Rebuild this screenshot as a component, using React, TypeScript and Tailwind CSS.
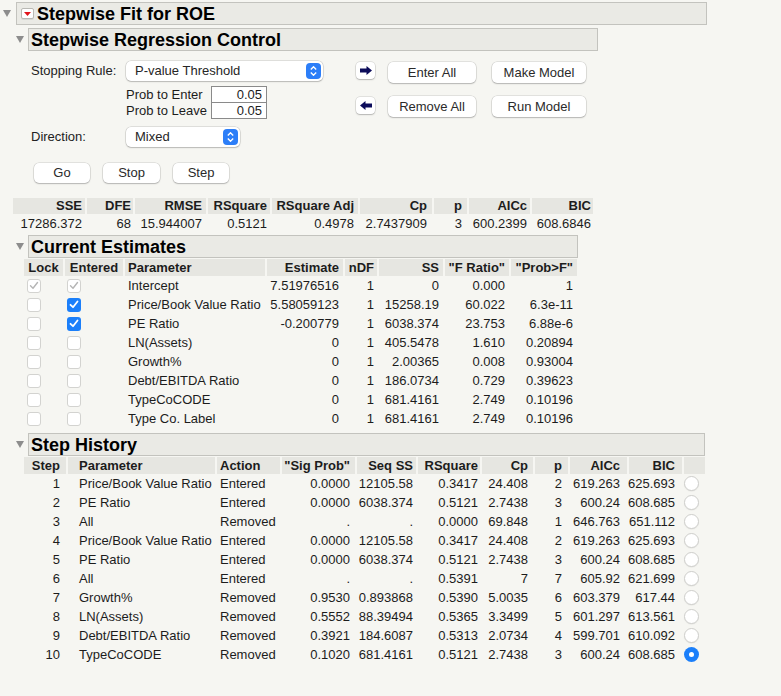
import React from 'react';

const Tri = () => (
  <svg width="8" height="7" viewBox="0 0 8 7" className="block">
    <polygon points="0,0 8,0 4,7" fill="#8d8d8d" />
  </svg>
);

const RedMenu = () => (
  <div className="w-[13px] h-[11px] rounded-[2px] border border-[#b9b9b4] bg-white flex items-center justify-center shadow-[0_1px_0_rgba(0,0,0,0.08)]">
    <svg width="7" height="4" viewBox="0 0 7 4" className="block">
      <polygon points="0,0 7,0 3.5,4" fill="#e0141b" />
    </svg>
  </div>
);

const Stepper = () => (
  <div className="w-[15px] h-[16px] rounded-[4px] bg-[#2c7ef8] flex flex-col items-center justify-center gap-[2px]">
    <svg width="7" height="4" viewBox="0 0 7 4" className="block">
      <polyline points="0.8,3.4 3.5,0.8 6.2,3.4" fill="none" stroke="white" strokeWidth="1.4" />
    </svg>
    <svg width="7" height="4" viewBox="0 0 7 4" className="block">
      <polyline points="0.8,0.6 3.5,3.2 6.2,0.6" fill="none" stroke="white" strokeWidth="1.4" />
    </svg>
  </div>
);

const Select: React.FC<{ label: string; w: string }> = ({ label, w }) => (
  <div className={`${w} h-[20px] bg-white rounded-[5px] shadow-[0_0_0_0.5px_rgba(0,0,0,0.18),0_1px_1.5px_rgba(0,0,0,0.18)] flex items-center justify-between pl-[9px] pr-[2px]`}>
    <span className="text-[#262626]">{label}</span>
    <Stepper />
  </div>
);

const Btn: React.FC<{ label: string; w: string; h?: string }> = ({ label, w, h = 'h-[20px]' }) => (
  <div className={`${w} ${h} bg-white rounded-[5px] shadow-[0_0_0_0.5px_rgba(0,0,0,0.16),0_1px_1.5px_rgba(0,0,0,0.2)] flex items-center justify-center text-[#2a2a2a]`}>
    {label}
  </div>
);

const ArrowBtn: React.FC<{ dir: 'r' | 'l' }> = ({ dir }) => (
  <div className="w-[19px] h-[17px] bg-white rounded-[4px] shadow-[0_0_0_0.5px_rgba(0,0,0,0.16),0_1px_1.5px_rgba(0,0,0,0.2)] flex items-center justify-center">
    <svg width="12" height="9" viewBox="0 0 12 9" className="block">
      {dir === 'r' ? (
        <path d="M0 2.5h6.5V0L12 4.5 6.5 9V6.5H0z" fill="#0c0c5a" />
      ) : (
        <path d="M12 2.5H5.5V0L0 4.5 5.5 9V6.5H12z" fill="#0c0c5a" />
      )}
    </svg>
  </div>
);

const Check: React.FC<{ state: 'off' | 'on' | 'dis' }> = ({ state }) => {
  if (state === 'on')
    return (
      <div className="w-[14px] h-[14px] rounded-[3px] bg-[#1b7ffa] flex items-center justify-center">
        <svg width="10" height="9" viewBox="0 0 10 9" className="block">
          <polyline points="1.5,4.8 4,7.2 8.5,1.5" fill="none" stroke="white" strokeWidth="1.8" strokeLinecap="round" strokeLinejoin="round" />
        </svg>
      </div>
    );
  return (
    <div className="w-[14px] h-[14px] rounded-[3px] bg-white border border-[#d3d3d0] flex items-center justify-center">
      {state === 'dis' && (
        <svg width="10" height="9" viewBox="0 0 10 9" className="block">
          <polyline points="1.5,4.8 4,7.2 8.5,1.5" fill="none" stroke="#b5b5b5" strokeWidth="1.4" strokeLinecap="round" strokeLinejoin="round" />
        </svg>
      )}
    </div>
  );
};

const Radio: React.FC<{ on?: boolean }> = ({ on }) =>
  on ? (
    <div className="w-[15px] h-[15px] rounded-full bg-[#1b7ffa] flex items-center justify-center">
      <div className="w-[5px] h-[5px] rounded-full bg-white" />
    </div>
  ) : (
    <div className="w-[15px] h-[15px] rounded-full bg-white border border-[#cfcfcc] shadow-[0_0.5px_1px_rgba(0,0,0,0.08)]" />
  );

const SectionHead: React.FC<{ title: string; w: string; mt: string }> = ({ title, w, mt }) => (
  <div className={`flex items-center ${mt}`}>
    <div className="w-[28px] pl-[16px] flex items-center">
      <Tri />
    </div>
    <div className={`${w} h-[23px] box-border border border-[#c3c3be] bg-[#eaeae5] flex items-center pl-[2px] text-[18px] font-bold text-black`}>
      {title}
    </div>
  </div>
);

// stats table
const statCols = [
  { h: 'SSE', v: '17286.372', p: 'pr-[3px]' },
  { h: 'DFE', v: '68', p: 'pr-[2px]' },
  { h: 'RMSE', v: '15.944007', p: 'pr-[4px]' },
  { h: 'RSquare', v: '0.5121', p: 'pr-[3px]' },
  { h: 'RSquare Adj', v: '0.4978', p: 'pr-[4px]' },
  { h: 'Cp', v: '2.7437909', p: 'pr-[5px]' },
  { h: 'p', v: '3', p: 'pr-[5px]' },
  { h: 'AICc', v: '600.2399', p: 'pr-[3px]' },
  { h: 'BIC', v: '608.6846', p: 'pr-[2px]' },
];

const estRows = [
  ['dis', 'dis', 'Intercept', '7.51976516', '1', '0', '0.000', '1'],
  ['off', 'on', 'Price/Book Value Ratio', '5.58059123', '1', '15258.19', '60.022', '6.3e-11'],
  ['off', 'on', 'PE Ratio', '-0.200779', '1', '6038.374', '23.753', '6.88e-6'],
  ['off', 'off', 'LN(Assets)', '0', '1', '405.5478', '1.610', '0.20894'],
  ['off', 'off', 'Growth%', '0', '1', '2.00365', '0.008', '0.93004'],
  ['off', 'off', 'Debt/EBITDA Ratio', '0', '1', '186.0734', '0.729', '0.39623'],
  ['off', 'off', 'TypeCoCODE', '0', '1', '681.4161', '2.749', '0.10196'],
  ['off', 'off', 'Type Co. Label', '0', '1', '681.4161', '2.749', '0.10196'],
] as const;

const histRows = [
  ['1', 'Price/Book Value Ratio', 'Entered', '0.0000', '12105.58', '0.3417', '24.408', '2', '619.263', '625.693'],
  ['2', 'PE Ratio', 'Entered', '0.0000', '6038.374', '0.5121', '2.7438', '3', '600.24', '608.685'],
  ['3', 'All', 'Removed', '.', '.', '0.0000', '69.848', '1', '646.763', '651.112'],
  ['4', 'Price/Book Value Ratio', 'Entered', '0.0000', '12105.58', '0.3417', '24.408', '2', '619.263', '625.693'],
  ['5', 'PE Ratio', 'Entered', '0.0000', '6038.374', '0.5121', '2.7438', '3', '600.24', '608.685'],
  ['6', 'All', 'Entered', '.', '.', '0.5391', '7', '7', '605.92', '621.699'],
  ['7', 'Growth%', 'Removed', '0.9530', '0.893868', '0.5390', '5.0035', '6', '603.379', '617.44'],
  ['8', 'LN(Assets)', 'Removed', '0.5552', '88.39494', '0.5365', '3.3499', '5', '601.297', '613.561'],
  ['9', 'Debt/EBITDA Ratio', 'Removed', '0.3921', '184.6087', '0.5313', '2.0734', '4', '599.701', '610.092'],
  ['10', 'TypeCoCODE', 'Removed', '0.1020', '681.4161', '0.5121', '2.7438', '3', '600.24', '608.685'],
];

const histHead = ['Step', 'Parameter', 'Action', '"Sig Prob"', 'Seq SS', 'RSquare', 'Cp', 'p', 'AICc', 'BIC'];
const histPad = [
  'justify-end pr-[6px]',
  'justify-start pl-[11px]',
  'justify-start pl-[3px]',
  'justify-end pr-[5px]',
  'justify-end pr-[3px]',
  'justify-end pr-[2px]',
  'justify-end pr-[5px]',
  'justify-end pr-[6px]',
  'justify-end pr-[7px]',
  'justify-end pr-[7px]',
];

export default function App() {
  return (
    <div className="w-[781px] h-[696px] overflow-hidden bg-[#f6f6f2] font-['Liberation_Sans',Arial,sans-serif] text-[13px] leading-[16px] text-[#1c1c1c] pt-[2px]">
      {/* top report header */}
      <div className="flex items-center">
        <div className="w-[16px] pl-[3px] flex items-center">
          <Tri />
        </div>
        <div className="w-[691px] h-[23px] box-border border border-[#c3c3be] bg-[#eaeae5] flex items-center pl-[4px] gap-[3px] text-[18px] leading-[22px] font-bold text-black">
          <RedMenu />
          <span>Stepwise Fit for ROE</span>
        </div>
      </div>

      <SectionHead title="Stepwise Regression Control" w="w-[570px]" mt="mt-[3px]" />

      {/* controls */}
      <div className="flex mt-[10px] pl-[31px]">
        <div className="w-[325px] flex flex-col">
          <div className="flex items-center h-[20px]">
            <div className="w-[95px] text-[#222]">Stopping Rule:</div>
            <Select label="P-value Threshold" w="w-[197px]" />
          </div>
          <div className="ml-[95px] mt-[5px] flex flex-col">
            <div className="flex items-center h-[17px]">
              <div className="w-[85px]">Prob to Enter</div>
              <div className="w-[56px] h-[17px] box-border border border-[#8a8a8a] bg-white flex items-center justify-end pr-[4px]">0.05</div>
            </div>
            <div className="flex items-center h-[17px] -mt-px">
              <div className="w-[85px]">Prob to Leave</div>
              <div className="w-[56px] h-[17px] box-border border border-[#8a8a8a] bg-white flex items-center justify-end pr-[4px]">0.05</div>
            </div>
          </div>
          <div className="flex items-center h-[20px] mt-[8px]">
            <div className="w-[95px] text-[#222]">Direction:</div>
            <Select label="Mixed" w="w-[114px]" />
          </div>
          <div className="flex items-center mt-[16px] ml-[3px] gap-[13px]">
            <Btn label="Go" w="w-[56px]" />
            <Btn label="Stop" w="w-[57px]" />
            <Btn label="Step" w="w-[56px]" />
          </div>
        </div>
        <div className="flex flex-col gap-[13px] mt-[1px]">
          <div className="flex items-start">
            <ArrowBtn dir="r" />
            <div className="ml-[13px]"><Btn label="Enter All" w="w-[88px]" h="h-[21px]" /></div>
            <div className="ml-[16px]"><Btn label="Make Model" w="w-[94px]" h="h-[21px]" /></div>
          </div>
          <div className="flex items-start">
            <div className="mt-[1px]"><ArrowBtn dir="l" /></div>
            <div className="ml-[13px]"><Btn label="Remove All" w="w-[88px]" h="h-[21px]" /></div>
            <div className="ml-[16px]"><Btn label="Run Model" w="w-[94px]" h="h-[21px]" /></div>
          </div>
        </div>
      </div>

      {/* fit statistics */}
      <div className="ml-[13px] mt-[15px] grid grid-cols-[72px_46px_71px_62px_86px_72px_33px_61px_61px] gap-x-[2px] w-max">
        {statCols.map(c => (
          <div key={c.h} className={`h-[16px] bg-[#e6e6e1] flex items-center justify-end font-bold ${c.p}`}>{c.h}</div>
        ))}
        {statCols.map(c => (
          <div key={c.h + 'v'} className={`h-[20px] flex items-center justify-end ${c.p}`}>{c.v}</div>
        ))}
      </div>

      <SectionHead title="Current Estimates" w="w-[550px]" mt="mt-[1px]" />

      <div className="ml-[24px] mt-[1px] grid grid-cols-[39px_58px_140px_76px_32px_64px_64px_66px] gap-x-[2px] w-max">
        {['Lock', 'Entered', 'Parameter', 'Estimate', 'nDF', 'SS', '"F Ratio"', '"Prob>F"'].map((h, i) => (
          <div
            key={h}
            className={`h-[17px] bg-[#e6e6e1] flex items-center font-bold ${
              i < 2 ? 'justify-center' : i === 2 ? 'justify-start pl-[3px]' : i === 4 ? 'justify-end pr-[3px]' : 'justify-end pr-[4px]'
            }`}
          >
            {h}
          </div>
        ))}
        {estRows.map(r => (
          <React.Fragment key={r[2]}>
            <div className="h-[19px] flex items-center pl-[3px]"><Check state={r[0]} /></div>
            <div className="h-[19px] flex items-center pl-[2px]"><Check state={r[1]} /></div>
            <div className="h-[19px] flex items-center pl-[3px]">{r[2]}</div>
            <div className="h-[19px] flex items-center justify-end pr-[4px]">{r[3]}</div>
            <div className="h-[19px] flex items-center justify-end pr-[3px]">{r[4]}</div>
            <div className="h-[19px] flex items-center justify-end pr-[4px]">{r[5]}</div>
            <div className="h-[19px] flex items-center justify-end pr-[4px]">{r[6]}</div>
            <div className="h-[19px] flex items-center justify-end pr-[4px]">{r[7]}</div>
          </React.Fragment>
        ))}
      </div>

      <SectionHead title="Step History" w="w-[677px]" mt="mt-[5px]" />

      <div className="ml-[24px] mt-[1px] grid grid-cols-[42px_147px_63px_73px_59px_62px_51px_33px_57px_53px_21px] gap-x-[2px] w-max">
        {histHead.map((h, i) => (
          <div key={h} className={`h-[17px] bg-[#e6e6e1] flex items-center font-bold ${histPad[i]}`}>{h}</div>
        ))}
        <div className="h-[17px] bg-[#e6e6e1]" />
        {histRows.map((r, ri) => (
          <React.Fragment key={r[0]}>
            {r.map((v, i) => (
              <div key={i} className={`h-[19px] flex items-center ${histPad[i]}`}>{v}</div>
            ))}
            <div className="h-[19px] flex items-center">
              <Radio on={ri === histRows.length - 1} />
            </div>
          </React.Fragment>
        ))}
      </div>
    </div>
  );
}
